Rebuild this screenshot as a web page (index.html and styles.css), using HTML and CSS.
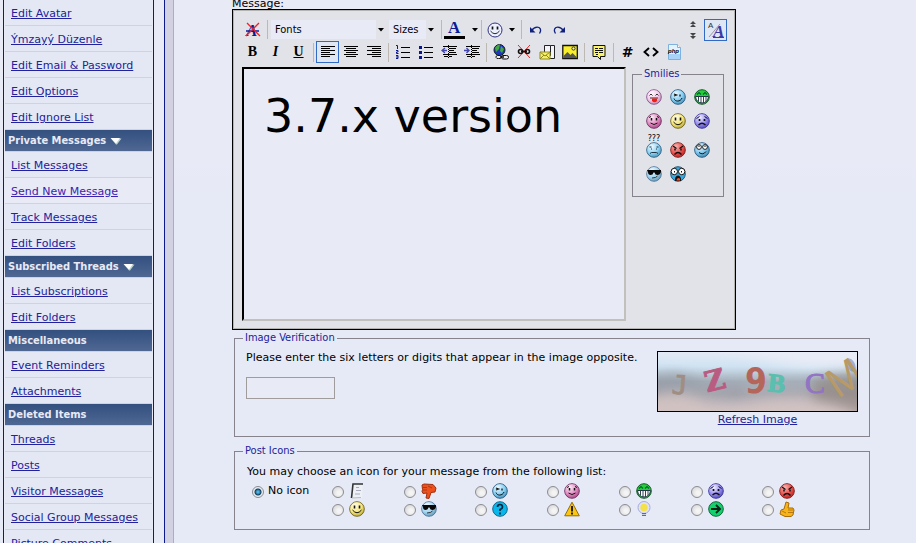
FILE: index.html
```html
<!DOCTYPE html>
<html lang="en">
<head>
<meta charset="utf-8">
<title>Message editor</title>
<link rel="stylesheet" href="styles.css">
</head>
<body>
<svg class="defs" aria-hidden="true">
  <defs>
    <radialGradient id="shine" cx=".35" cy=".25" r=".8"><stop offset="0" stop-color="#fff" stop-opacity=".9"/><stop offset=".6" stop-color="#fff" stop-opacity=".25"/><stop offset="1" stop-color="#000" stop-opacity=".2"/></radialGradient>
    <linearGradient id="sky" x1="0" y1="0" x2="0" y2="1"><stop offset="0" stop-color="#e4eaf6"/><stop offset=".25" stop-color="#cfe2f2"/><stop offset=".5" stop-color="#a5afb9"/><stop offset=".72" stop-color="#aaa9b1"/><stop offset="1" stop-color="#c5bbc0"/></linearGradient>
    <filter id="soft" x="-30%" y="-30%" width="160%" height="160%"><feGaussianBlur stdDeviation="6"/></filter>
  </defs>
  <symbol id="wink" viewBox="0 0 16 16"><circle cx="8" cy="8" r="7.3" fill="#5fc0f2" stroke="#2f5f88"/><circle cx="8" cy="8" r="7" fill="url(#shine)"/><path d="M4 5l2.500 1L4 7M10 5.500v2" stroke="#111" stroke-width="1.300" fill="none"/><path d="M4 9.500c1 3.500 6.500 3.500 8-.5" stroke="#111" fill="none"/></symbol>
  <symbol id="tongue" viewBox="0 0 16 16"><circle cx="8" cy="8" r="7.300" fill="#f0b8e4" stroke="#8a5a94"/><circle cx="8" cy="8" r="7" fill="url(#shine)"/><path d="M3.500 6.500l1.500-1.500 1.500 1.500M9.500 6.500l1.500-1.500 1.500 1.500M4 9h8" stroke="#333" fill="none"/><path d="M6 9.500h5v2.500q-2.500 2.500-5 0z" fill="#f21c12"/></symbol>
  <symbol id="grin" viewBox="0 0 16 16"><circle cx="8" cy="8" r="7.300" fill="#22d03a" stroke="#155b24"/><path d="M3 5.500l2-2 2 2M9 5.500l2-2 2 2" stroke="#063" fill="none" stroke-width="1.200"/><path d="M1.500 7.500h13q-.5 6-6.500 6.500-6-.5-6.500-6.500z" fill="#fff" stroke="#234"/><path d="M4.500 7.500v5M7 7.500v6.500M9.500 7.500v6.500M12 7.500v5" stroke="#345"/></symbol>
  <symbol id="blush" viewBox="0 0 16 16"><circle cx="8" cy="8" r="7.300" fill="#d963ae" stroke="#743969"/><circle cx="8" cy="8" r="7" fill="url(#shine)"/><path d="M3 4.500l2-1M11 3.500l2 1" stroke="#111"/><path d="M5.500 5v2.500M10.500 5v2.500" stroke="#111" stroke-width="1.500"/><path d="M4.500 10q3.500 3 7 0" stroke="#111" fill="none"/></symbol>
  <symbol id="smile" viewBox="0 0 16 16"><circle cx="8" cy="8" r="7.300" fill="#f5df4c" stroke="#766a2b"/><circle cx="8" cy="8" r="7" fill="url(#shine)"/><path d="M5.500 4.500v3M10.500 4.500v3" stroke="#111" stroke-width="1.600"/><path d="M3.500 9q4.500 5.500 9 0" stroke="#111" fill="none"/></symbol>
  <symbol id="sad" viewBox="0 0 16 16"><circle cx="8" cy="8" r="7.300" fill="#7467f2" stroke="#4038a0"/><circle cx="8" cy="8" r="7" fill="url(#shine)"/><path d="M2.500 5.500l3-2M10.500 3.500l3 2" stroke="#111"/><path d="M5.500 6v2M10.500 6v2" stroke="#111" stroke-width="1.700"/><path d="M4.500 12q3.500-3.500 7 0" stroke="#111" stroke-width="1.200" fill="none"/></symbol>
  <symbol id="confused" viewBox="0 0 16 16"><circle cx="8" cy="8" r="7.300" fill="#67c5f1" stroke="#39688c"/><circle cx="8" cy="8" r="7" fill="url(#shine)"/><path d="M3.500 5h2M10.500 5h2M5.500 6.500v1M10.500 6.500v1" stroke="#234"/><path d="M4 11.500l1.500-1h5l1.500 1" stroke="#234" fill="none"/></symbol>
  <symbol id="mad" viewBox="0 0 16 16"><circle cx="8" cy="8" r="7.300" fill="#e62f2a" stroke="#822321"/><circle cx="8" cy="8" r="7" fill="url(#shine)" opacity=".7"/><path d="M3 4l3.500 2.500M13 4L9.500 6.500" stroke="#111" stroke-width="1.300"/><path d="M5 6.500v2M11 6.500v2" stroke="#111" stroke-width="1.500"/><path d="M4.500 12.500q3.500-4 7 0" stroke="#111" stroke-width="1.300" fill="none"/></symbol>
  <symbol id="roll" viewBox="0 0 16 16"><circle cx="8" cy="8" r="7.300" fill="#50b2e7" stroke="#285c83"/><circle cx="8" cy="8" r="7" fill="url(#shine)"/><circle cx="5" cy="5" r="2.400" fill="#fff" stroke="#222"/><circle cx="11" cy="5" r="2.400" fill="#fff" stroke="#222"/><path d="M5 3.500v1.500M11 3.500v1.500M5 10.500q4 3 7-1" stroke="#111" fill="none"/></symbol>
  <symbol id="cool" viewBox="0 0 16 16"><circle cx="8" cy="8" r="7.300" fill="#83c8ee" stroke="#587b9d"/><circle cx="8" cy="8" r="7" fill="url(#shine)"/><path d="M1 4h14v2q-1 3-3.500 3T8.500 6.500h-1Q7 9 4.500 9T2 6z" fill="#080808"/><path d="M6 12q4 0 5.500-2" stroke="#333" fill="none"/></symbol>
  <symbol id="shock" viewBox="0 0 16 16"><circle cx="8" cy="8" r="7.300" fill="#3aa9df" stroke="#235776"/><circle cx="4.300" cy="5.500" r="3.200" fill="#fff" stroke="#111"/><circle cx="11.700" cy="5.500" r="3.200" fill="#fff" stroke="#111"/><path d="M4.500 5v1.500M11.500 5v1.500" stroke="#111"/><path d="M5 15q-.5-5 3-5.500Q11.500 10 11 15z" fill="#111"/><path d="M6.500 14.500q0-2.500 2-2.500t1.500 2.500z" fill="#f5532a"/></symbol>
  <symbol id="post" viewBox="0 0 16 16"><path d="M3 1h11l-1 14H2z" fill="#edf0f5"/><path d="M14 1H4L2.500 15" stroke="#333" fill="none" stroke-width="1.600"/><path d="M3 15l9-.5" stroke="#bbb"/><path d="M7 4.500h3M7 7.500h5M6 11h5" stroke="#aab"/></symbol>
  <symbol id="down" viewBox="0 0 16 16"><path d="M1 2l2-1 9 .5 3 3.500-1 4-4 .5-2 6-3-.5 1-5-4 .5-1-2 .500-2z" fill="#ee501b" stroke="#9c3014"/><path d="M2 4.500h4M2 7h4M7 3l4 2" stroke="#a73a18"/></symbol>
  <symbol id="ask" viewBox="0 0 16 16"><circle cx="8" cy="8" r="7.300" fill="#08b8ed" stroke="#12668d"/><path d="M5.500 6q0-2.500 2.500-2.500T10.500 6q0 1.500-2.500 2.500V10M8 11.500v2" stroke="#02233a" stroke-width="1.700" fill="none"/></symbol>
  <symbol id="warn" viewBox="0 0 16 16"><path d="M8 1.200L15.300 14.800H.7z" fill="#fbc513" stroke="#946c0b" stroke-linejoin="round"/><path d="M8 5v5.500M8 11.500v2" stroke="#111" stroke-width="1.800"/></symbol>
  <symbol id="bulb" viewBox="0 0 16 16"><circle cx="8" cy="6.500" r="6" fill="#dfe3fa" stroke="#a5abd9"/><circle cx="8" cy="6.500" r="3.700" fill="#f4e14a"/><path d="M6 12h4v3H6z" fill="#666b76"/><path d="M6 13.500h4" stroke="#c9cdd8"/></symbol>
  <symbol id="go" viewBox="0 0 16 16"><circle cx="8" cy="8" r="7.300" fill="#12d06c" stroke="#12653d"/><path d="M3 8h9M8 4l4 4-4 4" stroke="#062418" stroke-width="1.900" fill="none"/></symbol>
  <symbol id="up" viewBox="0 0 16 16"><path d="M7 1l3 1-1 5h5l1 2-1 5-2 1.500H6L1 13l1-4 3-1z" fill="#f8b416" stroke="#a96b0b"/><path d="M9 9h5M9 11.500h5M3 10l4 2" stroke="#b77b10"/></symbol>
  <symbol id="caret" viewBox="0 0 6 4"><path d="M0 0h6L3 3.500z" fill="#000"/></symbol>
</svg>

<div class="page">
  <nav class="sidebar" aria-label="Control panel">
    <ul class="menu">
      <li><a href="#">Edit Avatar</a></li>
      <li><a href="#">Ýmzayý Düzenle</a></li>
      <li><a href="#">Edit Email &amp; Password</a></li>
      <li><a href="#">Edit Options</a></li>
      <li><a href="#">Edit Ignore List</a></li>
    </ul>
    <h2>Private Messages <svg viewBox="0 0 12 8"><path d="M1 1.500h10.500L7 7.500H6z" fill="#b7d2c8"/><path d="M.5 1H10L6 6.500z" fill="#fff"/></svg></h2>
    <ul class="menu">
      <li><a href="#">List Messages</a></li>
      <li class="current"><a href="#">Send New Message</a></li>
      <li><a href="#">Track Messages</a></li>
      <li><a href="#">Edit Folders</a></li>
    </ul>
    <h2>Subscribed Threads <svg viewBox="0 0 12 8"><path d="M1 1.500h10.500L7 7.500H6z" fill="#b7d2c8"/><path d="M.5 1H10L6 6.500z" fill="#fff"/></svg></h2>
    <ul class="menu">
      <li><a href="#">List Subscriptions</a></li>
      <li><a href="#">Edit Folders</a></li>
    </ul>
    <h2>Miscellaneous</h2>
    <ul class="menu">
      <li><a href="#">Event Reminders</a></li>
      <li><a href="#">Attachments</a></li>
    </ul>
    <h2>Deleted Items</h2>
    <ul class="menu">
      <li><a href="#">Threads</a></li>
      <li><a href="#">Posts</a></li>
      <li><a href="#">Visitor Messages</a></li>
      <li><a href="#">Social Group Messages</a></li>
      <li><a href="#">Picture Comments</a></li>
    </ul>
  </nav>
  <div class="divider"></div>

  <main class="content">
    <label class="message-label" for="message">Message:</label>
    <section class="editor">
      <div class="toolbar">
        <button class="tool" type="button" aria-label="Remove formatting"><svg viewBox="0 0 16 16"><text x="1" y="14" class="glyph-a italic">A</text><path d="M1 9h13" stroke="#0a18a0" stroke-width="1.500"/><path d="M2 1l13 13M14 1L1 14" stroke="#e8242c" stroke-width="1.300"/></svg></button>
        <span class="sep"></span>
        <span class="picker fonts"><select aria-label="Fonts"><option>Fonts</option></select><svg><use href="#caret"/></svg></span>
        <span class="picker sizes"><select aria-label="Sizes"><option>Sizes</option></select><svg><use href="#caret"/></svg></span>
        <span class="sep"></span>
        <button class="tool wide" type="button" aria-label="Text colour"><svg class="swatch" viewBox="0 0 22 20"><text x="4" y="13" class="glyph-a">A</text><path d="M0 16h21v3H0z"/></svg><svg class="caret"><use href="#caret"/></svg></button>
        <span class="sep"></span>
        <button class="tool wide" type="button" aria-label="Insert smilie"><svg viewBox="0 0 16 16"><circle cx="8" cy="8" r="7" fill="#edf1ff" stroke="#303082"/><path d="M5.500 4.500v3M10.500 4.500v3" stroke="#111" stroke-width="1.700"/><path d="M3.500 9q4.500 5.500 9 0" stroke="#222" fill="none"/></svg><svg class="caret"><use href="#caret"/></svg></button>
        <span class="sep"></span>
        <button class="tool" type="button" aria-label="Undo"><svg viewBox="0 0 16 16"><path d="M3 9q4-5 8-3.500 3 2 .5 6" stroke="#10207e" stroke-width="1.300" fill="none"/><path d="M2 5v5.500h5.500z" fill="#10207e"/></svg></button>
        <button class="tool" type="button" aria-label="Redo"><svg viewBox="0 0 16 16"><path d="M13 9Q9 4 5 5.500q-3 2-.5 6" stroke="#10207e" stroke-width="1.300" fill="none"/><path d="M14 5v5.500H8.500z" fill="#10207e"/></svg></button>
        <button class="tool resize" type="button" aria-label="Resize editor"><svg viewBox="0 0 8 20"><path d="M4 1l3 3H1zM4 4l3 3H1zM1 13h6l-3 3zM1 16h6l-3 3z" fill="#444"/></svg></button>
        <button class="tool active" type="button" aria-label="Switch editor mode"><svg viewBox="0 0 18 18"><text x="1" y="7" font-size="8" fill="#333">A</text><path d="M2 16L13 3" stroke="#99a"/><text x="6" y="16" class="glyph-a italic mode">A</text><path d="M6 16.500h11" stroke="#3a3aa4"/></svg></button>
      </div>
      <div class="toolbar formatting">
        <button class="tool letter" type="button"><b>B</b></button>
        <button class="tool letter" type="button"><i>I</i></button>
        <button class="tool letter" type="button"><u>U</u></button>
        <span class="sep"></span>
        <button class="tool active" type="button" aria-label="Align left"><svg viewBox="0 0 16 16"><path d="M1 2.500h14M1 4.500h9M1 6.500h14M1 8.500h9M1 10.500h14M1 12.500h9" stroke="#000"/></svg></button>
        <button class="tool" type="button" aria-label="Align centre"><svg viewBox="0 0 16 16"><path d="M1 2.500h14M3 4.500h10M1 6.500h14M3 8.500h10M1 10.500h14M3 12.500h10" stroke="#000"/></svg></button>
        <button class="tool" type="button" aria-label="Align right"><svg viewBox="0 0 16 16"><path d="M1 2.500h14M6 4.500h9M1 6.500h14M6 8.500h9M1 10.500h14M6 12.500h9" stroke="#000"/></svg></button>
        <span class="sep"></span>
        <button class="tool" type="button" aria-label="Numbered list"><svg viewBox="0 0 16 16"><path d="M6 3.500h9M6 8.500h9M6 13.500h9" stroke="#000"/><path d="M1 1.500h1.500V5M1 6.500h2v1.500H1.500v1.500H3.500M1 11.500h2v3H1M1 13h2" stroke="#0a188c" fill="none"/></svg></button>
        <button class="tool" type="button" aria-label="Bulleted list"><svg viewBox="0 0 16 16"><path d="M6 3.500h9M6 8.500h9M6 13.500h9" stroke="#000"/><path d="M1 2h3v3H1zM1 7h3v3H1zM1 12h3v3H1z" fill="#0a188c"/></svg></button>
        <button class="tool" type="button" aria-label="Outdent"><svg viewBox="0 0 16 16"><path d="M2 2.500h14M8 4.500h7M8 6.500h5M8 8.500h7M2 10.500h14M3 12.500h4M8 12.500h3" stroke="#000"/><path d="M7.500 1v14" stroke="#000" stroke-dasharray="1 1"/><path d="M1 6.500h5M4 4L1 6.500 4 9" stroke="#4447b0" fill="none" stroke-width="1.400"/></svg></button>
        <button class="tool" type="button" aria-label="Indent"><svg viewBox="0 0 16 16"><path d="M2 2.500h14M8 4.500h7M8 6.500h5M8 8.500h7M2 10.500h14M3 12.500h4M8 12.500h3" stroke="#000"/><path d="M7.500 1v14" stroke="#000" stroke-dasharray="1 1"/><path d="M0 6.500h5M2.500 4L5 6.500 2.500 9" stroke="#4447b0" fill="none" stroke-width="1.400"/></svg></button>
        <span class="sep"></span>
        <button class="tool" type="button" aria-label="Insert link"><svg viewBox="0 0 16 16"><circle cx="6.500" cy="6" r="5.500" fill="#1e37bd" stroke="#122"/><path d="M2 4q2-3.500 5-3.500L6 5 3 8zM8 2l3 3-2 4-2-2z" fill="#44a840"/><path d="M4.500 11.500h3a2 1.800 0 010 3h-2a2 1.500 0 01-1-3zM10 11.500h3.500a1.800 1.500 0 010 3.500H11a1.800 1.500 0 01-1-3.500z" fill="#eee" stroke="#111"/><path d="M7 13h4" stroke="#111" stroke-width="1.500"/></svg></button>
        <button class="tool" type="button" aria-label="Remove link"><svg viewBox="0 0 16 16"><path d="M2 1l12 13M14 1L2 14" stroke="#e22c2c"/><rect x="2.500" y="5.500" width="4" height="4" rx="2" fill="none" stroke="#111" stroke-width="1.600"/><rect x="9.500" y="5.500" width="4" height="4" rx="2" fill="none" stroke="#111" stroke-width="1.600"/><path d="M5 7.500h6" stroke="#111" stroke-width="1.500"/></svg></button>
        <button class="tool" type="button" aria-label="Insert email"><svg viewBox="0 0 16 16"><path d="M5.500 1.500h6v10h-6zM11.500 1.500h4v13h-5" fill="#f4f5fa" stroke="#222"/><path d="M1 8h10v7H1z" fill="#f5ef65" stroke="#8f8a28"/><path d="M1 8l5 4 5-4M1 15l4-4M11 15l-4-4" stroke="#8f8a28" fill="none"/></svg></button>
        <button class="tool" type="button" aria-label="Insert image"><svg viewBox="0 0 16 16"><path d="M.8 1.500h14.500v13H.8z" fill="#f8ee2d" stroke="#111" stroke-width="1.300"/><path d="M1.500 14V12l4-4 3 3 2-2 4 4v1z" fill="#555"/><circle cx="11.500" cy="4.500" r="1.600" fill="#fff7a0" stroke="#333"/></svg></button>
        <span class="sep"></span>
        <button class="tool" type="button" aria-label="Insert quote"><svg viewBox="0 0 16 16"><path d="M2 1.500h12v11H9.500v3l-3-3H2z" fill="#fbf36c" stroke="#111"/><path d="M4 4.500h3M8 4.500h4M4 6.500h8M4 8.500h3M8 8.500h4M5 10.500h2" stroke="#111"/></svg></button>
        <span class="sep"></span>
        <button class="tool code" type="button">#</button>
        <button class="tool" type="button" aria-label="Insert HTML"><svg viewBox="0 0 16 16"><path d="M6 4L1.500 8 6 12M10 4l4.500 4-4.500 4" fill="none" stroke="#000" stroke-width="1.900"/></svg></button>
        <button class="tool" type="button" aria-label="Insert PHP"><svg viewBox="0 0 16 16"><path d="M2.500.5h9l3 3v12h-12z" fill="#e4f2fd" stroke="#7eb1dc"/><path d="M3 10h11v5H3z" fill="#a9d4f7"/><path d="M11.500.5v3h3" fill="#fff" stroke="#7eb1dc"/><text x="2" y="9" font-size="6" font-weight="bold" font-style="italic">php</text></svg></button>
      </div>
      <div class="editor-body">
        <textarea id="message" spellcheck="false">3.7.x version</textarea>
        <fieldset class="smilies">
          <legend>Smilies</legend>
          <div class="smilie-grid">
            <svg><use href="#tongue"/></svg><svg><use href="#wink"/></svg><svg><use href="#grin"/></svg>
            <svg><use href="#blush"/></svg><svg><use href="#smile"/></svg><svg><use href="#sad"/></svg>
            <span class="puzzled"><small>???</small><svg><use href="#confused"/></svg></span><svg><use href="#mad"/></svg><svg><use href="#roll"/></svg>
            <svg><use href="#cool"/></svg><svg><use href="#shock"/></svg>
          </div>
        </fieldset>
      </div>
    </section>

    <fieldset class="group verification">
      <legend>Image Verification</legend>
      <div class="verify-row">
        <div class="verify-entry">
          <label for="code">Please enter the six letters or digits that appear in the image opposite.</label>
          <input id="code" type="text">
        </div>
        <div class="captcha">
          <svg viewBox="0 0 199 59">
            <path d="M0 0h199v59H0z" fill="url(#sky)"/>
            <path d="M55-8h160v20Q165 18 130 12T55-8z" fill="#e8ecf7" filter="url(#soft)"/>
            <path d="M-10 26q25-12 45 0t50 8v12Q30 28-10 46z" fill="#8d929c" opacity=".5" filter="url(#soft)"/>
            <path d="M-10 46q30-10 50 2t60 2 110 8v20H-10z" fill="#d5c5c3" opacity=".8" filter="url(#soft)"/>
            <path d="M155 28q25-8 60-6v50q-30-20-60-24z" fill="#8d8078" opacity=".6" filter="url(#soft)"/>
            <ellipse cx="193" cy="13" rx="4" ry="7" fill="#5c7aba" opacity=".5" transform="rotate(-25 193 13)"/>
            <text x="14" y="42" class="c-j" transform="rotate(4 20 32)">J</text>
            <text x="46" y="38" class="c-z" transform="rotate(-14 57 26)">Z</text>
            <text x="87" y="41" class="c-9">9</text>
            <text x="110" y="40" class="c-8" transform="rotate(6 119 31)">B</text>
            <text x="147" y="41" class="c-c">C</text>
            <text x="168" y="40" class="c-m" transform="rotate(-34 186 24)">M</text>
          </svg>
          <a href="#">Refresh Image</a>
        </div>
      </div>
    </fieldset>

    <fieldset class="group post-icons">
      <legend>Post Icons</legend>
      <p>You may choose an icon for your message from the following list:</p>
      <div class="icon-grid">
        <label class="none"><input type="radio" name="icon" checked>No icon</label>
        <label><input type="radio" name="icon"><svg><use href="#post"/></svg></label>
        <label><input type="radio" name="icon"><svg><use href="#down"/></svg></label>
        <label><input type="radio" name="icon"><svg><use href="#wink"/></svg></label>
        <label><input type="radio" name="icon"><svg><use href="#blush"/></svg></label>
        <label><input type="radio" name="icon"><svg><use href="#grin"/></svg></label>
        <label><input type="radio" name="icon"><svg><use href="#sad"/></svg></label>
        <label><input type="radio" name="icon"><svg><use href="#mad"/></svg></label>
        <label class="second"><input type="radio" name="icon"><svg><use href="#smile"/></svg></label>
        <label><input type="radio" name="icon"><svg><use href="#cool"/></svg></label>
        <label><input type="radio" name="icon"><svg><use href="#ask"/></svg></label>
        <label><input type="radio" name="icon"><svg><use href="#warn"/></svg></label>
        <label><input type="radio" name="icon"><svg><use href="#bulb"/></svg></label>
        <label><input type="radio" name="icon"><svg><use href="#go"/></svg></label>
        <label><input type="radio" name="icon"><svg><use href="#up"/></svg></label>
      </div>
    </fieldset>
  </main>
</div>
</body>
</html>
```
FILE: styles.css
```css
* { box-sizing: border-box; }
html { height: 100%; overflow: hidden; }
body {
  height: 100%;
  margin: 0;
  background: linear-gradient(#e8eaf6 160px, #e5eaf6 240px);
  color: #000;
  font: 11px/14px "DejaVu Sans", Verdana, sans-serif;
}
a { color: #22229c; }
svg { display: block; width: 16px; height: 16px; flex: none; }
.defs { position: absolute; width: 0; height: 0; }

.page { display: flex; min-height: 100%; }

/* Sidebar */
.sidebar {
  flex: none;
  width: 151px;
  margin: 0 10px 0 3px;
  padding: 0 1px;
  background: #e8eaf6;
  border: solid #0b198c;
  border-width: 0 1px;
}
.menu { margin: 0; padding: 0; list-style: none; }
.menu li {
  height: 26px;
  padding: 1px 6px 0;
  line-height: 25px;
  white-space: nowrap;
  background: #e3e8f4;
  border-bottom: 1px solid #d1d1e1;
}
.menu .current { background: #e8eaf6; }
.menu .current a { color: #3a24b0; }
.sidebar h2 {
  display: flex;
  align-items: center;
  gap: 4px;
  height: 22px;
  margin: 0;
  padding: 0 3px;
  color: #e8eaf6;
  font: bold 11px/21px "DejaVu Sans Condensed", Tahoma, sans-serif;
  background: linear-gradient(#33507f, #4f6793);
  border-bottom: 1px solid #d1d1e1;
}
.sidebar h2 svg { width: 12px; height: 8px; }
.divider {
  flex: none;
  width: 10px;
  background: #d1d1e1;
  border: solid #0b198c;
  border-width: 0 1px;
  border-right-color: #aeaeb4;
}

/* Main column */
.content { flex: 1; min-width: 0; padding: 0 46px 0 58px; }
.message-label { display: block; height: 9px; line-height: 8px; }

.editor {
  width: 504px;
  padding: 8px;
  background: #e2e3e9;
  border: 1px solid #000;
  outline: 1px solid #b4b4b2;
  outline-offset: -2px;
}
.toolbar { display: flex; align-items: center; height: 23px; }
.toolbar.formatting { height: 22px; }
.tool {
  display: flex;
  flex: none;
  align-items: center;
  justify-content: center;
  width: 23px;
  height: 22px;
  padding: 0;
  color: #000;
  background: none;
  border: 1px solid transparent;
}
.tool.wide { width: 34px; gap: 6px; }
.tool.active { background: #dfe6f4; border-color: #316ac5; }
.tool.resize { margin-left: auto; }
.tool .swatch { width: 22px; height: 20px; }
.tool.active svg { width: 18px; height: 18px; }
.formatting .tool.active svg { width: 16px; height: 16px; }
.tool.resize svg { width: 8px; height: 20px; }
.tool .caret { width: 6px; height: 4px; }
.tool.letter { font: bold 14px/16px "Liberation Serif", serif; }
.tool.code { font: bold 14px/16px "DejaVu Sans", sans-serif; }
.glyph-a { font: bold 17px "Liberation Serif", serif; fill: #0b1b96; }
.italic { font-style: italic; }
.mode { fill: #3a3aa4; }
.sep { flex: none; width: 6px; height: 19px; background: linear-gradient(#bdb9b2, #bdb9b2) center / 1px 100% no-repeat; }
.picker { position: relative; flex: none; height: 19px; margin: 0 1px; }
.picker select {
  width: 100%;
  height: 100%;
  padding: 0 4px;
  color: #000;
  font: 11px/19px "DejaVu Sans Condensed", Tahoma, sans-serif;
  background: linear-gradient(90deg, #e8eaf6 calc(100% - 11px), #e2e3e9 0);
  border: 0;
  border-radius: 0;
  appearance: none;
}
.picker svg { position: absolute; top: 8px; right: 3px; width: 6px; height: 4px; pointer-events: none; }
.fonts { width: 116px; }
.sizes { width: 48px; }

.editor-body { display: flex; align-items: flex-start; gap: 6px; padding: 4px 3px 0 1px; }
textarea {
  flex: 1;
  min-width: 0;
  height: 254px;
  padding: 20px;
  color: #000;
  font: 46px/54px "DejaVu Sans", Verdana, sans-serif;
  background: #e8eaf6;
  border: solid #c2c0bc;
  border-width: 2px;
  border-top-color: #000;
  border-left-color: #000;
  outline: 0;
  resize: none;
}
fieldset { min-width: 0; margin: 0; border: 1px solid #87838c; }
legend { color: #22229c; font: 11px/14px "DejaVu Sans Condensed", Tahoma, sans-serif; padding: 0 2px; }
.smilies { width: 92px; padding: 4px 8px 10px 9px; }
.smilie-grid {
  display: grid;
  grid-template-columns: repeat(3, 24px);
  grid-template-rows: 24px 24px 29px 24px;
  align-items: end;
  justify-items: center;
}
.smilie-grid svg { margin-bottom: 4px; }
.puzzled { display: flex; flex-direction: column; align-items: center; }
.puzzled small { font: 8px/6px "DejaVu Sans", sans-serif; }

/* Form groups */
.group { margin: 1px 0 7px 2px; padding: 0 9px 0 8px; }
.verify-row { display: flex; justify-content: space-between; }
.verify-entry { display: flex; flex-direction: column; align-items: flex-start; gap: 12px; padding: 6px 0 0 3px; white-space: nowrap; }
.verification { height: 106px; }
.verify-entry input { width: 89px; height: 22px; padding: 2px; font: inherit; background: #e8eaf6; border: 1px solid #a09c9c; }
.captcha { flex: none; width: 201px; padding-top: 6px; text-align: center; line-height: 15px; margin-right: 2px; }
.captcha svg { width: 201px; height: 61px; border: 1px solid #000; }
.captcha .c-j { font: 26px "DejaVu Sans Mono", monospace; fill: #a08e84; stroke: #a08e84; }
.captcha .c-z { font: bold 28px "DejaVu Serif", serif; fill: #b95c82; stroke: #b95c82; }
.captcha .c-9 { font: bold 35px "DejaVu Sans Condensed", sans-serif; fill: #b5665b; }
.captcha .c-8 { font: bold 26px "Liberation Serif", serif; fill: #5abfae; stroke: #5abfae; }
.captcha .c-c { font: 30px "Liberation Serif", serif; fill: #9274c4; stroke: #9274c4; }
.captcha .c-m { font: 42px "Liberation Sans", sans-serif; fill: #b79a67; }

.post-icons { height: 86px; margin: 0 0 0 2px; }
.post-icons p { margin: 7px 4px 3px; }
.icon-grid {
  display: grid;
  grid-template-columns: 80px repeat(7, 1fr);
  grid-auto-rows: 18px;
  margin: 0 26px 0 9px;
}
.icon-grid label { display: flex; align-items: center; gap: 5px; }
.icon-grid .none { gap: 4px; }
.icon-grid .second { grid-column: 2; }
input[type="radio"] {
  flex: none;
  width: 12px;
  height: 12px;
  margin: 2px 0 0;
  appearance: none;
  background: radial-gradient(circle at 60% 60%, #f4f4f4 20%, #cfcfd4);
  border: 1px solid #8c8c90;
  border-radius: 50%;
}
input[type="radio"]:checked { background: radial-gradient(circle, #49b4e4 1px, #153c5a 3px, #e6edf5 4px); }
```
